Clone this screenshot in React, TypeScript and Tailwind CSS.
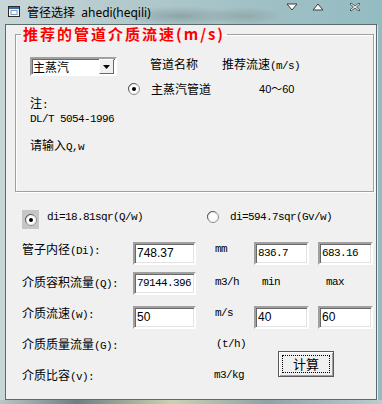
import React from "react";

const CJK = /[\u3000-\u9fff\uff00-\uffef]/;

// SimSun-like label: CJK in Noto Sans CJK, latin in a narrow mono
function Label({ text, className = "" }: { text: string; className?: string }) {
  const parts = text.match(/[\u3000-\u9fff\uff00-\uffef]+|[^\u3000-\u9fff\uff00-\uffef]+/g) ?? [];
  return (
    <span className={`flex items-baseline h-[14px] whitespace-pre leading-[14px] text-[12px] text-black ${className}`}>
      {parts.map((p, i) =>
        CJK.test(p) ? (
          <span key={i} className="font-['Noto_Sans_CJK_SC',sans-serif] text-[12px] leading-[14px]">{p}</span>
        ) : (
          <span key={i} className="font-['Liberation_Mono',monospace] text-[11px] leading-[14px] tracking-[-0.6px]">{p}</span>
        )
      )}
    </span>
  );
}

function Radio({ checked }: { checked?: boolean }) {
  return (
    <svg width="12" height="12" viewBox="0 0 12 12" className="shrink-0 block">
      <circle cx="6" cy="6" r="5.5" fill="#fff" stroke="#8a8a8a" />
      <path d="M1.5 8.5 A5 5 0 0 1 8.5 1.5" fill="none" stroke="#5a5a5a" strokeWidth="1" />
      <circle cx="6" cy="6" r="4.5" fill="none" stroke="#e8e8e8" />
      {checked && <circle cx="6" cy="6" r="2" fill="#000" />}
    </svg>
  );
}

function Field({ value, w, mono }: { value: string; w: string; mono?: boolean }) {
  return (
    <div
      className={`${w} h-[23px] shrink-0 bg-white border-2 border-t-[#a0a0a0] border-l-[#a0a0a0] border-b-white border-r-white shadow-[inset_1px_1px_0_#696969,inset_-1px_-1px_0_#e3e3e3] pl-[2px] pt-[2px] leading-[14px] text-black ${
        mono ? "font-['Liberation_Mono',monospace] text-[11px] tracking-[-0.6px]" : "font-['Liberation_Sans',sans-serif] text-[12px]"
      }`}
    >
      {value}
    </div>
  );
}

function TitleGlyphs() {
  return (
    <div className="flex items-start pt-[2px]">
      <svg width="12" height="8" viewBox="0 0 12 8" className="mt-[1px]">
        <path d="M1 1 H11 L6 7 Z" fill="#fff" stroke="#3a3a3a" strokeWidth="1" />
      </svg>
      <svg width="12" height="8" viewBox="0 0 12 8" className="ml-[14px] mt-[1px]">
        <path d="M1 7 H11 L6 1 Z" fill="#fff" stroke="#3a3a3a" strokeWidth="1" />
      </svg>
      <svg width="12" height="10" viewBox="0 0 12 10" className="ml-[25px]">
        <path d="M2 1 L6 4 L10 1 L11 2 L7.5 5 L11 8 L10 9 L6 6 L2 9 L1 8 L4.5 5 L1 2 Z" fill="#fff" stroke="#3a3a3a" strokeWidth="0.8" />
      </svg>
    </div>
  );
}

export default function App() {
  return (
    <div className="w-[382px] h-[404px] overflow-hidden flex flex-col bg-[linear-gradient(90deg,#c9d6d8_0%,#b4cacd_30%,#9fc0c5_70%,#93bcc2_100%)]">
      {/* title bar */}
      <div className="h-[24px] flex items-start shrink-0 bg-[radial-gradient(ellipse_60px_10px_at_180px_16px,#8fa5a8,transparent),radial-gradient(ellipse_40px_9px_at_245px_16px,#93a9ab,transparent)]">
        <svg width="12" height="11" viewBox="0 0 12 11" className="ml-[8px] mt-[6px]">
          <rect x="0.5" y="0.5" width="11" height="10" fill="#eef6fb" stroke="#2b2b2b" />
          <rect x="1" y="1" width="10" height="2" fill="#3a6fb0" />
          <rect x="3" y="4.5" width="6" height="4" fill="#fff" stroke="#6a8aa8" strokeWidth="0.8" />
        </svg>
        <span className="ml-[7px] mt-[4px] leading-[16px] text-[12px] text-black">
          <span className="font-['Noto_Sans_CJK_SC',sans-serif]">管径选择</span>
          <span className="font-['Noto_Sans',sans-serif]">&nbsp; ahedi(heqili)</span>
        </span>
        <div className="ml-auto mr-[21px]">
          <TitleGlyphs />
        </div>
      </div>

      {/* client area */}
      <div className="ml-[5px] w-[372px] h-[376px] shrink-0 bg-[#f0f0f0] border border-[#5e6b6d] shadow-[1px_1px_0_#dfe9ea] flex flex-col">
        <fieldset className="ml-[9px] mt-[1px] w-[359px] border border-[#a0a0a0] shadow-[inset_1px_1px_0_#fff,1px_1px_0_#fff]">
          <legend className="ml-[5px] px-[2px] leading-[16px] font-['Noto_Sans_CJK_SC',sans-serif] text-[15px] font-bold tracking-[2px] text-[#ff0000]">
            推荐的管道介质流速(m/s)
          </legend>
          <div className="pb-[39px]">
            <div className="flex items-start mt-[15px] pl-[14px]">
              <div className="w-[87px] h-[19px] bg-white border-2 border-t-[#a0a0a0] border-l-[#a0a0a0] border-b-white border-r-white shadow-[inset_1px_1px_0_#696969] flex items-center">
                <span className="pl-[1px] font-['Noto_Sans_CJK_SC',sans-serif] text-[12px] leading-[14px] text-black">主蒸汽</span>
                <div className="ml-auto mr-[1px] w-[15px] h-[15px] bg-[#f0f0f0] border border-t-white border-l-white border-b-[#696969] border-r-[#696969] flex items-center justify-center">
                  <svg width="7" height="4" viewBox="0 0 7 4">
                    <path d="M0 0 H7 L3.5 4 Z" fill="#000" />
                  </svg>
                </div>
              </div>
              <Label text="管道名称" className="ml-[33px]" />
              <Label text="推荐流速(m/s)" className="ml-[24px]" />
            </div>

            <div className="flex items-center mt-[7px] h-[12px]">
              <div className="ml-[112px]">
                <Radio checked />
              </div>
              <Label text="主蒸汽管道" className="ml-[11px]" />
              <span className="ml-[48px] font-['Liberation_Sans','Noto_Sans_CJK_SC',sans-serif] text-[11px] leading-[14px] text-black">
                40～60
              </span>
            </div>

            <div className="flex flex-col items-start pl-[14px]">
              <Label text="注:" className="mt-[1px]" />
              <Label text="DL/T 5054-1996" className="mt-[2px]" />
              <Label text="请输入Q,w" className="mt-[12px]" />
            </div>
          </div>
        </fieldset>

        {/* formula choice */}
        <div className="flex items-start mt-[18px] pl-[16px]">
          <div className="w-[185px] flex items-start">
            <div className="w-[17px] h-[19px] bg-[#c6c6c6] flex items-center justify-center">
              <Radio checked />
            </div>
            <Label text="di=18.81sqr(Q/w)" className="ml-[8px]" />
          </div>
          <div className="mt-[1px]">
            <Radio />
          </div>
          <Label text="di=594.7sqr(Gv/w)" className="ml-[11px]" />
        </div>

        {/* inputs */}
        <div className="flex items-start mt-[13px] pl-[16px]">
          <Label text="管子内径(Di):" className="w-[111px] shrink-0" />
          <Field value="748.37" w="w-[63px]" />
          <Label text="mm" className="ml-[19px] w-[39px] shrink-0" />
          <Field value="836.7" w="w-[55px]" mono />
          <div className="ml-[9px]">
            <Field value="683.16" w="w-[55px]" mono />
          </div>
        </div>

        <div className="flex items-start mt-[7px] pl-[16px]">
          <Label text="介质容积流量(Q):" className="w-[111px] shrink-0 mt-[3px]" />
          <Field value="79144.396" w="w-[63px]" mono />
          <Label text="m3/h" className="ml-[19px] w-[39px] shrink-0 mt-[3px]" />
          <Label text="min" className="w-[55px] shrink-0 pl-[8px] mt-[3px]" />
          <Label text="max" className="ml-[9px] pl-[8px] mt-[3px]" />
        </div>

        <div className="flex items-start mt-[11px] pl-[16px]">
          <Label text="介质流速(w):" className="w-[111px] shrink-0" />
          <Field value="50" w="w-[63px]" />
          <Label text="m/s" className="ml-[19px] w-[39px] shrink-0" />
          <Field value="40" w="w-[55px]" />
          <div className="ml-[9px]">
            <Field value="60" w="w-[55px]" />
          </div>
        </div>

        <div className="flex items-start pl-[16px]">
          <div className="w-[256px] flex flex-col">
            <div className="flex mt-[8px]">
              <Label text="介质质量流量(G):" className="w-[194px] shrink-0" />
              <Label text="(t/h)" />
            </div>
            <div className="flex mt-[17px]">
              <Label text="介质比容(v):" className="w-[192px] shrink-0" />
              <Label text="m3/kg" />
            </div>
          </div>
          <button className="relative mt-[22px] w-[56px] h-[26px] bg-[#f0f0f0] border border-[#5a5a5a] shadow-[inset_1px_1px_0_#fff,inset_-1px_-1px_0_#a0a0a0] flex items-center justify-center">
            <span className="absolute inset-[3px] border border-dotted border-black" />
            <span className="font-['Noto_Sans_CJK_SC',sans-serif] text-[13px] leading-[16px] text-black">计算</span>
          </button>
        </div>
      </div>

      <div className="flex-1 bg-[linear-gradient(90deg,#b9c6c8,#6f7f82_20%,#c9d2b0_45%,#8fa3a6_70%,#b8cdd0)]" />
    </div>
  );
}
